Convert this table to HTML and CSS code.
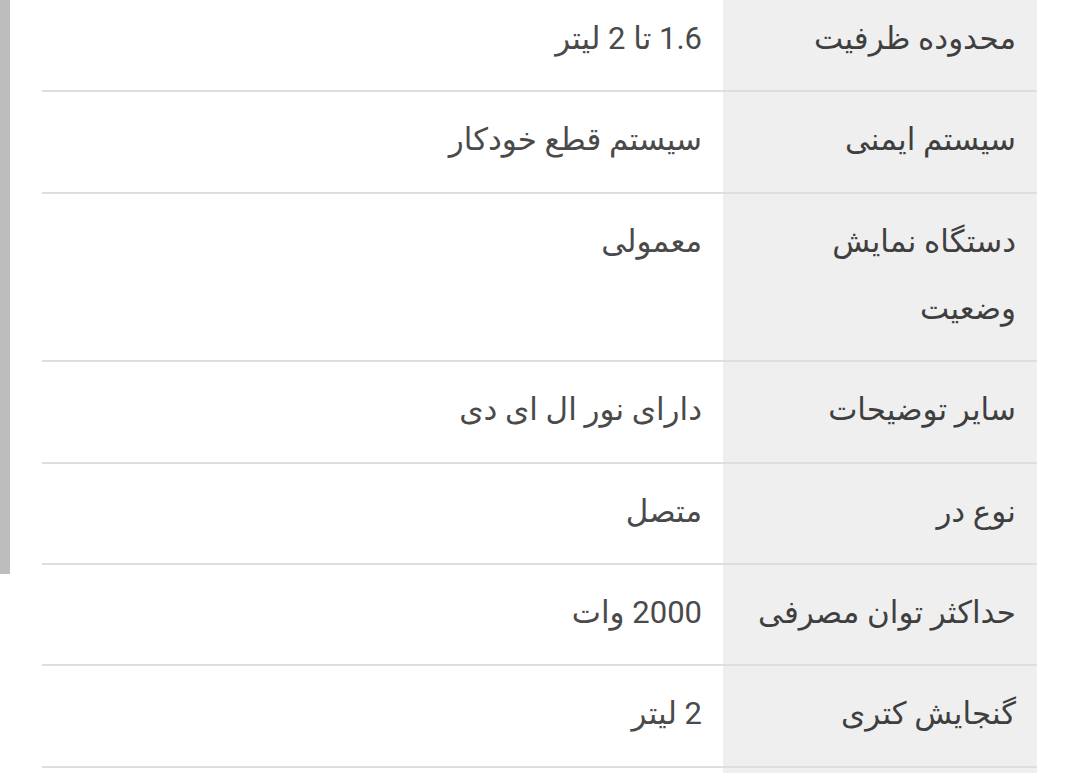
FILE: index.html
```html
<!DOCTYPE html>
<html lang="fa" dir="rtl">
<head>
<meta charset="utf-8">
<link rel="stylesheet" href="styles.css">
</head>
<body>
<div class="scroll-indicator"></div>
<div class="page">
  <table class="specs">
    <tbody>
      <tr><th>محدوده ظرفیت</th><td>1.6 تا 2 لیتر</td></tr>
      <tr><th>سیستم ایمنی</th><td>سیستم قطع خودکار</td></tr>
      <tr><th>دستگاه نمایش وضعیت</th><td>معمولی</td></tr>
      <tr><th>سایر توضیحات</th><td>دارای نور ال ای دی</td></tr>
      <tr><th>نوع در</th><td>متصل</td></tr>
      <tr><th>حداکثر توان مصرفی</th><td>2000 وات</td></tr>
      <tr><th>گنجایش کتری</th><td>2 لیتر</td></tr>
      <tr class="tail"><th></th><td></td></tr>
    </tbody>
  </table>
</div>
</body>
</html>
```

FILE: styles.css
```css
html, body {
  margin: 0;
  padding: 0;
  background: #ffffff;
  overflow: hidden;
}
body {
  font-family: Roboto, "DejaVu Sans", sans-serif;
  color: #444444;
  height: 777px;
}
.scroll-indicator {
  position: absolute;
  left: 0;
  top: 0;
  width: 10px;
  height: 574px;
  background: #bdbdbd;
}
.page {
  padding: 0 43px 0 42px;
  margin-top: -9px;
}
.specs {
  width: 100%;
  border-collapse: collapse;
  font-size: 31px;
  line-height: 67px;
}
.specs th,
.specs td {
  text-align: right;
  vertical-align: top;
  padding: 14px 21px 18.4px 21px;
  border-bottom: 2px solid #dedede;
  font-weight: normal;
}
.specs th {
  width: 272px;
  background: #efefef;
  color: #3f3f3f;
}
.specs td {
  color: #4a4a4a;
}
.specs .tail th,
.specs .tail td {
  padding: 0;
  height: 5px;
  line-height: 5px;
  border-bottom: none;
}
```
